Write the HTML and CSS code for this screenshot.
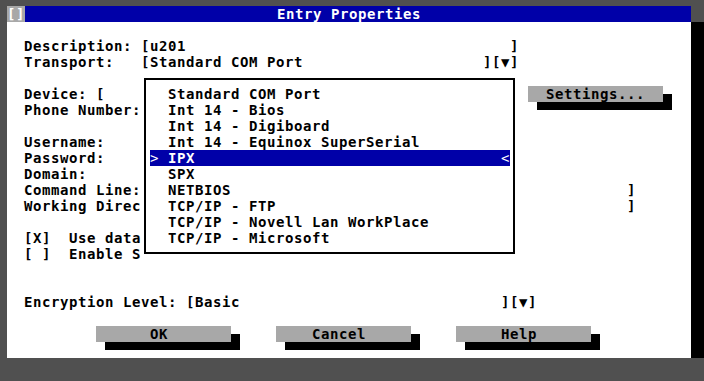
FILE: index.html
```html
<!DOCTYPE html>
<html lang="en">
<head>
    <meta charset="UTF-8">
    <meta name="viewport" content="width=device-width, initial-scale=1.0">
    <title>Entry Properties</title>
    <link rel="stylesheet" href="styles.css">
</head>
<body>
    <div class="dialog">
        <div class="titlebar">
            <span class="close">[]</span>
            <span class="title">Entry Properties</span>
        </div>
        <div class="content">
            <div class="row"></div>
            <div class="row">Description: [u201                                    ]</div>
            <div class="row">Transport:   [Standard COM Port                    ][▼]</div>
            <div class="row"></div>
            <div class="row split settings-row"><span>Device: [</span><span class="btn">  Settings...  </span></div>
            <div class="row">Phone Number:</div>
            <div class="row"></div>
            <div class="row">Username:</div>
            <div class="row">Password:</div>
            <div class="row">Domain:</div>
            <div class="row split field-row"><span>Command Line:</span><span>]</span></div>
            <div class="row split field-row"><span>Working Direc</span><span>]</span></div>
            <div class="row"></div>
            <div class="row">[X]  Use data</div>
            <div class="row">[ ]  Enable S</div>
            <div class="row"></div>
            <div class="row"></div>
            <div class="row">Encryption Level: [Basic                             ][▼]</div>
            <div class="row"></div>
            <div class="row">        <span class="btn">      OK       </span>     <span class="btn">    Cancel     </span>     <span class="btn">     Help      </span></div>
            <div class="row"></div>
        </div>

        <div class="dropdown">
            <div class="list">
                <div class="item">  Standard COM Port</div>
                <div class="item">  Int 14 - Bios</div>
                <div class="item">  Int 14 - Digiboard</div>
                <div class="item">  Int 14 - Equinox SuperSerial</div>
                <div class="item selected"><span><span class="mark">&gt;</span> IPX</span><span class="mark">&lt;</span></div>
                <div class="item">  SPX</div>
                <div class="item">  NETBIOS</div>
                <div class="item">  TCP/IP - FTP</div>
                <div class="item">  TCP/IP - Novell Lan WorkPlace</div>
                <div class="item">  TCP/IP - Microsoft</div>
            </div>
        </div>
    </div>
</body>
</html>
```

FILE: styles.css
```css
body {
    margin: 0;
    overflow: hidden;
    background-color: #505050;
    font-family: "DejaVu Sans Mono", "Liberation Mono", monospace;
    font-weight: bold;
    font-size: 14px;
    letter-spacing: 0.5713px;
    line-height: 16px;
    color: #000;
}

.dialog {
    position: relative;
    width: 684px;
    margin: 6px 0 0 7px;
    background-color: #fff;
    box-shadow: 18px 16px 0 #000;
}

.titlebar {
    display: grid;
    grid-template-columns: 18px 1fr 18px;
    height: 16px;
    background-color: #0000a8;
    color: #fff;
    white-space: pre;
}

.close {
    background-color: #a8a8a8;
    color: #fff;
}

.title {
    text-align: center;
}

.content {
    padding-left: 17px;
}

.row {
    height: 16px;
    white-space: pre;
}

/* rows whose right part sits past the dropdown: one char = 9px */
.split {
    display: flex;
    justify-content: space-between;
}

.settings-row {
    width: 639px;
}

.field-row {
    width: 612px;
}

.btn {
    display: inline-block;
    vertical-align: top;
    width: 135px;
    height: 16px;
    background-color: #a8a8a8;
    box-shadow: 9px 8px 0 #000;
}

.dropdown {
    position: absolute;
    left: 134px;
    top: 64px;
    width: 378px;
    height: 192px;
    box-sizing: border-box;
    padding: 8px 4px 6px 3px;
    background-color: #fff;
}

.list {
    padding: 6px 3px 6px 4px;
    border: 2px solid #000;
}

.item {
    height: 16px;
    white-space: pre;
}

.selected {
    display: flex;
    justify-content: space-between;
    background-color: #0000a8;
    color: #fff;
}

.mark {
    font-weight: normal;
}
```
